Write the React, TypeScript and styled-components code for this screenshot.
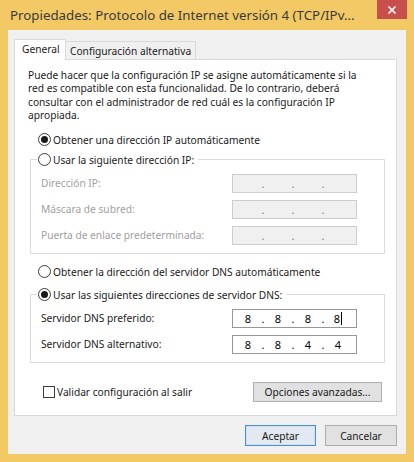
import React from "react";
import styled, { createGlobalStyle } from "styled-components";

const FONT = `"Noto Sans", "Open Sans", "DejaVu Sans", sans-serif`;

const GlobalStyle = createGlobalStyle`
  html, body { margin: 0; padding: 0; background: #f3c966; }
  body { font-family: ${FONT}; }
  #root { width: 414px; height: 462px; }
  * { box-sizing: border-box; }
`;

const Window = styled.div`
  width: 414px;
  height: 462px;
  background: #f3c966;
  display: flex;
  flex-direction: column;
  font-family: ${FONT};
  font-size: 10.2px;
  color: #1a1a1a;
`;

const TitleBar = styled.div`
  height: 30px;
  flex: none;
  display: flex;
  justify-content: space-between;
  align-items: flex-start;
  padding: 0 7px 0 10px;
`;

const Title = styled.div`
  font-size: 13.3px;
  line-height: 30px;
  color: #3a3a3a;
  white-space: nowrap;
`;

const CloseButton = styled.button`
  width: 30px;
  height: 19px;
  border: 0;
  padding: 0;
  background: #c8504c;
  display: flex;
  align-items: center;
  justify-content: center;
`;

const Client = styled.div`
  flex: 1;
  margin: 0 8px 8px;
  background: #f0f0f0;
  padding: 9px 9px 8px 6px;
  display: flex;
  flex-direction: column;
`;

const TabBar = styled.div`
  height: 20px;
  flex: none;
  display: flex;
  align-items: flex-end;
`;

const Tab = styled.div<{ $active?: boolean; $w: number }>`
  width: ${(p) => p.$w}px;
  height: ${(p) => (p.$active ? 21 : 18)}px;
  margin-bottom: ${(p) => (p.$active ? -1 : 0)}px;
  padding: 0 0 ${(p) => (p.$active ? 3 : 0)}px ${(p) => (p.$active ? 7 : 4)}px;
  background: ${(p) => (p.$active ? "#ffffff" : "#f0f0f0")};
  border: 1px solid #d9d9d9;
  border-bottom: none;
  border-left: ${(p) => (p.$active ? "1px solid #d9d9d9" : "none")};
  position: relative;
  z-index: ${(p) => (p.$active ? 1 : 0)};
  display: flex;
  align-items: center;
  white-space: nowrap;
`;

const Panel = styled.div`
  flex: 1;
  background: #ffffff;
  border: 1px solid #d9d9d9;
  padding: 9px 11px 13px 13px;
  display: flex;
  flex-direction: column;
`;

const Intro = styled.p`
  margin: 0;
  line-height: 13.33px;
  white-space: nowrap;
`;

const RadioRow = styled.label<{ $indent?: number; $top?: number; $disabled?: boolean }>`
  display: flex;
  align-items: center;
  gap: 2px;
  height: 16px;
  margin: ${(p) => p.$top ?? 0}px 0 0 ${(p) => p.$indent ?? 0}px;
  white-space: nowrap;
`;

const RadioMark = styled.span<{ $checked?: boolean }>`
  width: 13px;
  height: 13px;
  flex: none;
  border-radius: 50%;
  border: 1px solid #3c3c3c;
  background: #ffffff;
  display: flex;
  align-items: center;
  justify-content: center;
  &::after {
    content: "";
    width: 7px;
    height: 7px;
    border-radius: 50%;
    background: #1a1a1a;
    display: ${(p) => (p.$checked ? "block" : "none")};
  }
`;

const GroupBox = styled.fieldset<{ $top: number }>`
  margin: ${(p) => p.$top}px 0 0 2px;
  padding: 6px 27px 8px 10px;
  border: 1px solid #dcdcdc;
  min-width: 0;
`;

const GroupLegend = styled.legend`
  margin-left: -4px;
  padding: 0 4px 0 1px;
`;

const FieldGrid = styled.div`
  display: grid;
  grid-template-columns: 191px 125px;
  row-gap: 7px;
  align-items: center;
`;

const FieldLabel = styled.span<{ $disabled?: boolean }>`
  color: ${(p) => (p.$disabled ? "#a0a0a0" : "#1a1a1a")};
  white-space: nowrap;
`;

const IpField = styled.div<{ $disabled?: boolean }>`
  height: 19px;
  border: 1px solid ${(p) => (p.$disabled ? "#cdcdcd" : "#979797")};
  background: ${(p) => (p.$disabled ? "#f0f0f0" : "#ffffff")};
  padding: 0 0 0 3px;
  display: grid;
  grid-template-columns: 24px 6px 24px 6px 24px 6px 24px;
  align-items: center;
  justify-items: center;
  font-size: 11px;
  color: ${(p) => (p.$disabled ? "#7a7a7a" : "#000000")};
`;

const Segment = styled.span`
  display: inline-flex;
  align-items: center;
  height: 17px;
`;

const Caret = styled.span`
  width: 1px;
  height: 13px;
  background: #000000;
  margin-left: 1px;
`;

const FooterRow = styled.div`
  display: flex;
  justify-content: space-between;
  align-items: center;
  height: 20px;
  margin: 19px 3px 0 15px;
`;

const CheckRow = styled.label`
  display: flex;
  align-items: center;
  gap: 2px;
  white-space: nowrap;
`;

const CheckBox = styled.span`
  width: 12px;
  height: 12px;
  border: 1px solid #3c3c3c;
  background: #ffffff;
  flex: none;
`;

const PushButton = styled.button<{ $default?: boolean; $w: number; $h: number }>`
  width: ${(p) => p.$w}px;
  height: ${(p) => p.$h}px;
  padding: 0;
  font: inherit;
  color: #1a1a1a;
  border: 1px solid ${(p) => (p.$default ? "#4a8fd3" : "#adadad")};
  background: ${(p) => (p.$default ? "#e3e9f0" : "#e1e1e1")};
  box-shadow: ${(p) => (p.$default ? "inset 0 0 0 1px #cfe2f5" : "none")};
`;

const DialogButtons = styled.div`
  flex: none;
  display: flex;
  justify-content: flex-end;
  gap: 9px;
  margin-top: 9px;
`;

type IpProps = { parts?: string[]; disabled?: boolean; caret?: boolean };

const IpInput = ({ parts, disabled, caret }: IpProps) => {
  const p = parts ?? ["", "", "", ""];
  return (
    <IpField $disabled={disabled}>
      <Segment>{p[0]}</Segment>
      <Segment>.</Segment>
      <Segment>{p[1]}</Segment>
      <Segment>.</Segment>
      <Segment>{p[2]}</Segment>
      <Segment>.</Segment>
      <Segment>
        {p[3]}
        {caret && <Caret />}
      </Segment>
    </IpField>
  );
};

export default function App() {
  return (
    <>
      <GlobalStyle />
      <Window>
        <TitleBar>
          <Title>Propiedades: Protocolo de Internet versión 4 (TCP/IPv...</Title>
          <CloseButton aria-label="Cerrar">
            <svg width="10" height="10" viewBox="0 0 10 10">
              <path d="M1.5 1.5 L8.5 8.5 M8.5 1.5 L1.5 8.5" stroke="#ffffff" strokeWidth="1.7" />
            </svg>
          </CloseButton>
        </TitleBar>
        <Client>
          <TabBar>
            <Tab $active $w={52}>General</Tab>
            <Tab $w={130}>Configuración alternativa</Tab>
          </TabBar>
          <Panel>
            <Intro>
              Puede hacer que la configuración IP se asigne automáticamente si la
              <br />
              red es compatible con esta funcionalidad. De lo contrario, deberá
              <br />
              consultar con el administrador de red cuál es la configuración IP
              <br />
              apropiada.
            </Intro>
            <RadioRow $indent={10} $top={9.67}>
              <RadioMark $checked />
              Obtener una dirección IP automáticamente
            </RadioRow>
            <GroupBox $top={4}>
              <GroupLegend>
                <RadioRow>
                  <RadioMark />
                  Usar la siguiente dirección IP:
                </RadioRow>
              </GroupLegend>
              <FieldGrid>
                <FieldLabel $disabled>Dirección IP:</FieldLabel>
                <IpInput disabled />
                <FieldLabel $disabled>Máscara de subred:</FieldLabel>
                <IpInput disabled />
                <FieldLabel $disabled>Puerta de enlace predeterminada:</FieldLabel>
                <IpInput disabled />
              </FieldGrid>
            </GroupBox>
            <RadioRow $indent={10} $top={10}>
              <RadioMark />
              Obtener la dirección del servidor DNS automáticamente
            </RadioRow>
            <GroupBox $top={7}>
              <GroupLegend>
                <RadioRow>
                  <RadioMark $checked />
                  Usar las siguientes direcciones de servidor DNS:
                </RadioRow>
              </GroupLegend>
              <FieldGrid>
                <FieldLabel>Servidor DNS preferido:</FieldLabel>
                <IpInput parts={["8", "8", "8", "8"]} caret />
                <FieldLabel>Servidor DNS alternativo:</FieldLabel>
                <IpInput parts={["8", "8", "4", "4"]} />
              </FieldGrid>
            </GroupBox>
            <FooterRow>
              <CheckRow>
                <CheckBox />
                Validar configuración al salir
              </CheckRow>
              <PushButton $w={129} $h={20}>Opciones avanzadas...</PushButton>
            </FooterRow>
          </Panel>
          <DialogButtons>
            <PushButton $default $w={71} $h={21}>Aceptar</PushButton>
            <PushButton $w={72} $h={21}>Cancelar</PushButton>
          </DialogButtons>
        </Client>
      </Window>
    </>
  );
}
